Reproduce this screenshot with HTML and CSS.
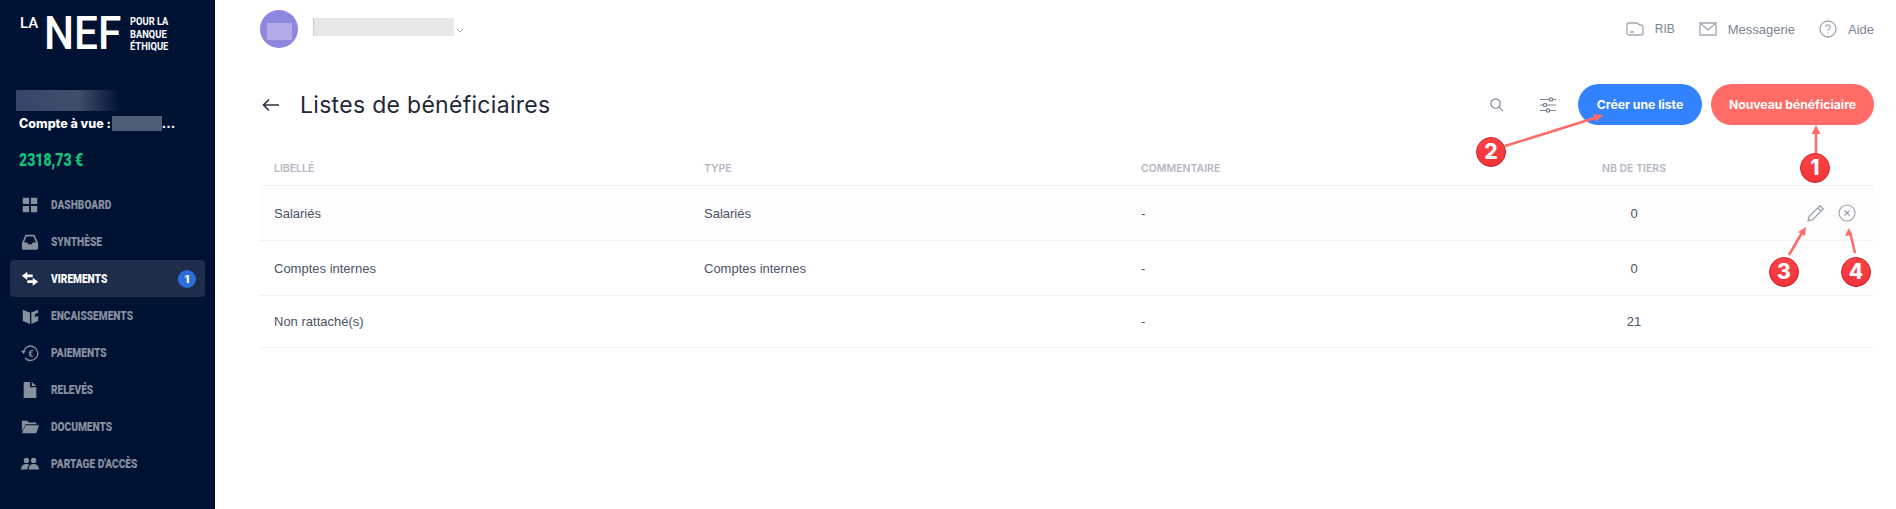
FILE: index.html
```html
<!doctype html>

<html lang="fr">

<head>
  <meta charset="utf-8">
  <title>Listes de bénéficiaires</title>
  <link rel="stylesheet" href="styles.css">
</head>

<body>

  <div class="app">

    <aside class="sidebar">
      <div class="logo">
        <span class="logo-la">LA</span>
        <span class="logo-nef">NEF</span>
        <span class="logo-tag">POUR LA<br>BANQUE<br>ÉTHIQUE</span>
      </div>

      <div class="account-blur"></div>
      <div class="account-name">Compte à vue :<span class="account-hidden"></span>...</div>
      <div class="account-amount"><span class="narrow">2318,73 €</span></div>

      <nav class="nav">
        <a class="nav-item">
          <svg class="nav-icon" viewBox="0 0 20 20"><path d="M2 2h7v7H2zM11 2h7v7h-7zM2 11h7v7H2zM11 11h7v7h-7z"/></svg>
          <span class="narrow">DASHBOARD</span>
        </a>
        <a class="nav-item">
          <svg class="nav-icon" viewBox="0 0 20 20"><path fill-rule="evenodd" d="M5 2h10l4 9v6a1.500 1.500 0 0 1-1.500 1.500h-15A1.500 1.500 0 0 1 1 17v-6zM6 4l-2.500 6.500H7l1 2h4l1-2h3.500L14 4z"/></svg>
          <span class="narrow">SYNTHÈSE</span>
        </a>
        <a class="nav-item active">
          <svg class="nav-icon" viewBox="0 0 20 20"><path d="M7 2v3h6v3H7v3L1 6.500zM13 8.500v3H7v3h6v3l6-4.500z"/></svg>
          <span class="narrow">VIREMENTS</span>
          <span class="nav-badge">1</span>
        </a>
        <a class="nav-item">
          <svg class="nav-icon" viewBox="0 0 20 20"><path d="M2 3l8 3.500V19l-8-3.500zM11.500 6L19 3v3.500l-3.500 1.200V11l3.500-1v5.500L11.500 19z"/></svg>
          <span class="narrow">ENCAISSEMENTS</span>
        </a>
        <a class="nav-item">
          <svg class="nav-icon" viewBox="0 0 20 20"><path class="line" d="M2.800 8.500A8 8 0 1 1 4.500 15.500"/><path d="M0 7.500h5.500L2.800 11z"/><text class="euro" x="11" y="14">€</text></svg>
          <span class="narrow">PAIEMENTS</span>
        </a>
        <a class="nav-item">
          <svg class="nav-icon" viewBox="0 0 20 20"><path d="M3 1h7v6h7v12H3zM12 1l5 4.500h-5z"/></svg>
          <span class="narrow">RELEVÉS</span>
        </a>
        <a class="nav-item">
          <svg class="nav-icon" viewBox="0 0 20 20"><path d="M1 3h6l2 2h8v2H5l-4 8zM5 8h15l-3 9H1z"/></svg>
          <span class="narrow">DOCUMENTS</span>
        </a>
        <a class="nav-item">
          <svg class="nav-icon" viewBox="0 0 20 20"><circle cx="6" cy="6" r="3"/><circle cx="14" cy="6" r="3"/><path d="M0 16c0-4 3-6 6-6 1.500 0 2.500.5 3 1-1 1-2 3-2 5zM8.500 16c0-4 2.500-6 5.500-6s6 2 6 6z"/></svg>
          <span class="narrow">PARTAGE D'ACCÈS</span>
        </a>
      </nav>
    </aside>

    <main class="main">

      <header class="topbar">
        <div class="avatar"><div class="avatar-inner"></div></div>
        <div class="user-blur"></div>
        <svg class="chevron" viewBox="0 0 10 6"><path d="M1 1l4 4 4-4"/></svg>

        <div class="top-links">
          <a class="top-link top-link-rib">
            <svg class="top-icon" viewBox="0 0 18 14"><path d="M1 3a2 2 0 0 1 2-2h8l2.500 2H15a2 2 0 0 1 2 2v6a2 2 0 0 1-2 2H3a2 2 0 0 1-2-2zM4 10h4"/></svg>
            RIB
          </a>
          <a class="top-link">
            <svg class="top-icon" viewBox="0 0 18 14"><path d="M1 1h16v12H1zM1 1l8 7 8-7"/></svg>
            Messagerie
          </a>
          <a class="top-link">
            <svg class="top-icon help" viewBox="0 0 18 18"><circle cx="9" cy="9" r="8"/><path d="M6.800 7a2.200 2.200 0 1 1 3.300 2c-.8.500-1.100.9-1.100 1.700M9 12.600v.6"/></svg>
            Aide
          </a>
        </div>
      </header>

      <div class="page-head">
        <svg class="back" viewBox="0 0 18 14"><path d="M17 7H2M7 1.500L1.500 7 7 12.500"/></svg>
        <h1 class="title">Listes de bénéficiaires</h1>
        <div class="actions">
          <svg class="tool search" viewBox="0 0 16 16"><circle cx="7" cy="7" r="5"/><path d="M11 11l4 4"/></svg>
          <svg class="tool filters" viewBox="0 0 16 16"><path d="M0 2.500h9M13 2.500h3M0 8h3M7 8h9M0 13.500h6M10 13.500h6"/><circle cx="11" cy="2.500" r="1.700"/><circle cx="5" cy="8" r="1.700"/><circle cx="8" cy="13.500" r="1.700"/></svg>
          <button class="btn btn-blue">Créer une liste</button>
          <button class="btn btn-red">Nouveau bénéficiaire</button>
        </div>
      </div>

      <div class="table">
        <div class="row row-head">
          <div>Libellé</div>
          <div>Type</div>
          <div>Commentaire</div>
          <div class="cell-center">Nb de tiers</div>
          <div></div>
        </div>
        <div class="row row-hover">
          <div>Salariés</div>
          <div>Salariés</div>
          <div>-</div>
          <div class="cell-center">0</div>
          <div class="row-actions">
            <svg class="row-icon" viewBox="0 0 16 16"><path d="M11.500 1.500l3 3L5 14l-4 1 1-4zM9.500 3.500l3 3"/></svg>
            <svg class="row-icon" viewBox="0 0 18 18"><circle cx="9" cy="9" r="8"/><path d="M6.500 6.500l5 5M11.500 6.500l-5 5"/></svg>
          </div>
        </div>
        <div class="row">
          <div>Comptes internes</div>
          <div>Comptes internes</div>
          <div>-</div>
          <div class="cell-center">0</div>
          <div></div>
        </div>
        <div class="row row-last">
          <div>Non rattaché(s)</div>
          <div></div>
          <div>-</div>
          <div class="cell-center">21</div>
          <div></div>
        </div>
      </div>

    </main>
  </div>

  <!-- annotations drawn over the screenshot -->
  <svg class="notes" viewBox="0 0 1896 509">
    <defs>
      <linearGradient id="pin" x1="0" y1="0" x2="0" y2="1">
        <stop offset="0" stop-color="#ff4448"/>
        <stop offset="1" stop-color="#ee3238"/>
      </linearGradient>
    </defs>
    <g class="arrows">
      <path d="M1816 154L1816 130"/>
      <path d="M1505 146L1598 117"/>
      <path d="M1789 255L1803 231"/>
      <path d="M1855 253L1850 232"/>
    </g>
    <g class="arrow-heads">
      <path d="M1816 125l-4.500 9h9z"/>
      <path d="M1603 115l-10-1 3 8z"/>
      <path d="M1806 227l-8 5 7 4z"/>
      <path d="M1849 228l-4 8 7-1z"/>
    </g>
    <g class="pins">
      <circle cx="1815" cy="168" r="14.500"/>
      <circle cx="1491" cy="152" r="14.500"/>
      <circle cx="1784" cy="272" r="14.500"/>
      <circle cx="1856" cy="272" r="14.500"/>
    </g>
    <g class="pin-text">
      <text x="1815" y="175">1</text>
      <text x="1491" y="159">2</text>
      <text x="1784" y="279">3</text>
      <text x="1856" y="279">4</text>
    </g>
  </svg>

</body>

</html>
```

FILE: styles.css
```css
* {
  box-sizing: border-box;
}

html,
body {
  margin: 0;
  height: 100%;
  overflow: hidden;
  background-color: #fff;
}

body {
  position: relative;
  font-family: "Inter", "Liberation Sans", sans-serif;
  color: #4a5366;
}

.app {
  display: flex;
  height: 509px;
}

/* no condensed face is installed, so squeeze the bold one */
.narrow {
  display: inline-block;
  transform: scaleX(0.78);
  transform-origin: left center;
  white-space: nowrap;
}

/* sidebar */

.sidebar {
  width: 215px;
  flex-shrink: 0;
  background-color: #001233;
  padding: 17px 10px 0;
}

.logo {
  display: flex;
  height: 73px;
  padding-left: 10px;
  color: #fff;
  font-family: "Roboto", "Liberation Sans", sans-serif;
}

.logo-la {
  font-size: 15px;
  font-weight: 500;
  line-height: 12px;
  width: 24px;
}

.logo-nef {
  width: 86px;
  font-size: 46px;
  font-weight: 500;
  line-height: 33px;
  white-space: nowrap;
  transform: scaleX(0.92);
  transform-origin: left center;
}

.logo-tag {
  font-size: 11px;
  font-weight: 700;
  line-height: 12.700px;
  margin-top: -1px;
  white-space: nowrap;
  transform: scaleX(0.85);
  transform-origin: left top;
}

.account-blur {
  width: 104px;
  height: 21px;
  margin-left: 6px;
  background: linear-gradient(90deg, #36466a, #3f4f6a 60%, #001233);
}

.account-name {
  display: flex;
  align-items: center;
  margin: 5px 0 0 9px;
  height: 15px;
  font-size: 12.500px;
  font-weight: 800;
  color: #fff;
  white-space: nowrap;
}

.account-hidden {
  width: 50px;
  height: 15px;
  margin-left: 1px;
  background-color: #4f5f78;
}

.account-amount {
  margin: 20px 0 0 9px;
  font-family: "Roboto", sans-serif;
  font-size: 18px;
  line-height: 18px;
  font-weight: 900;
  color: #12c27a;
}

.nav {
  display: flex;
  flex-direction: column;
  margin-top: 17px;
}

.nav-item {
  display: flex;
  align-items: center;
  height: 37px;
  padding-left: 11px;
  border-radius: 4px;
  font-family: "Roboto", sans-serif;
  font-size: 13px;
  font-weight: 900;
  color: #87909f;
  white-space: nowrap;
}

.nav-item.active {
  background-color: #1d2d4b;
  color: #fff;
}

.nav-icon {
  width: 18px;
  height: 18px;
  margin-right: 12px;
  fill: #87909f;
}

.nav-item.active .nav-icon {
  fill: #fff;
}

.nav-icon .line {
  fill: none;
  stroke: #87909f;
  stroke-width: 1.500;
}

.nav-icon .euro {
  font-size: 11px;
  font-weight: 700;
  text-anchor: middle;
}

.nav-badge {
  display: flex;
  align-items: center;
  justify-content: center;
  width: 18px;
  height: 18px;
  margin-left: auto;
  margin-right: 9px;
  border-radius: 50%;
  background-color: #2c6fdc;
  font-family: "Inter", sans-serif;
  font-size: 10px;
  color: #fff;
}

/* main */

.main {
  flex: 1;
  min-width: 0;
  padding: 0 22px 0 45px;
}

.topbar {
  display: flex;
  align-items: center;
  height: 58px;
}

.avatar {
  display: flex;
  align-items: center;
  justify-content: center;
  width: 38px;
  height: 38px;
  border-radius: 50%;
  background-color: #8d87e0;
}

.avatar-inner {
  width: 25px;
  height: 17px;
  margin-top: 5px;
  background-color: #b1ace8;
}

.user-blur {
  width: 141px;
  height: 18px;
  margin: -4px 0 0 15px;
  border-left: 1px solid #c9ccd2;
  background-color: #e6e7e9;
}

.chevron {
  width: 8px;
  height: 5px;
  margin-left: 2px;
  margin-top: 2px;
  fill: none;
  stroke: #9ea4ae;
  stroke-width: 1.200;
}

.top-links {
  display: flex;
  align-items: center;
  gap: 24px;
  margin-left: auto;
}

.top-link {
  display: flex;
  align-items: center;
  gap: 11px;
  font-family: "Liberation Sans", sans-serif;
  font-size: 13px;
  color: #7c8494;
}

.top-link-rib {
  font-size: 12px;
}

.top-icon {
  width: 18px;
  height: 14px;
  fill: none;
  stroke: #a2a7b1;
  stroke-width: 1.300;
}

.top-icon.help {
  height: 18px;
}

.page-head {
  display: flex;
  align-items: center;
  height: 41px;
  margin-top: 26px;
  padding-left: 2px;
}

.back {
  width: 18px;
  height: 14px;
  fill: none;
  stroke: #2b3242;
  stroke-width: 1.600;
}

.title {
  margin: 0 0 0 20px;
  font-size: 23px;
  font-weight: 400;
  letter-spacing: 0.3px;
  color: #1f2738;
}

.actions {
  display: flex;
  align-items: center;
  margin-left: auto;
}

.tool {
  width: 15px;
  height: 15px;
  fill: none;
  stroke: #7c8494;
  stroke-width: 1.200;
}

.tool.filters {
  width: 16px;
  height: 16px;
  margin: 0 22px 0 36px;
}

.btn {
  height: 41px;
  border: none;
  border-radius: 21px;
  font-family: inherit;
  font-size: 12.200px;
  font-weight: 700;
  color: #fff;
}

.btn-blue {
  width: 124px;
  background-color: #3382ff;
}

.btn-red {
  width: 163px;
  margin-left: 9px;
  background-color: #ff6b66;
}

/* table */

.table {
  margin-top: 18px;
}

.row {
  display: grid;
  grid-template-columns: 430px 437px 433px 120px 1fr;
  align-items: center;
  height: 55px;
  padding-left: 14px;
  border-bottom: 1px solid #f1f3f6;
  font-family: "Liberation Sans", sans-serif;
  font-size: 13px;
}

.row > div:first-child {
  margin-right: -14px;
}

.row-head {
  height: 43px;
  padding-top: 9px;
  font-family: "Inter", sans-serif;
  font-size: 10.500px;
  font-weight: 600;
  text-transform: uppercase;
  color: #b3b8c4;
}

.row-hover {
  background-color: #fdfdfd;
}

.row-last {
  height: 52px;
}

.cell-center {
  text-align: center;
  white-space: nowrap;
}

.row-actions {
  display: flex;
  align-items: center;
  justify-content: flex-end;
  gap: 13px;
  padding-right: 18px;
}

.row-icon {
  width: 18px;
  height: 18px;
  fill: none;
  stroke: #9ea4ae;
  stroke-width: 1.200;
}

/* annotations */

.notes {
  position: absolute;
  top: 0;
  left: 0;
  width: 1896px;
  height: 509px;
  pointer-events: none;
}

.arrows path {
  fill: none;
  stroke: #ff6b66;
  stroke-width: 2.500;
}

.arrow-heads path {
  fill: #ff6b66;
}

.pins circle {
  fill: url(#pin);
  stroke: #c9262c;
  stroke-width: 1;
}

.pin-text text {
  font-family: "Inter", sans-serif;
  font-size: 21px;
  font-weight: 800;
  fill: #fff;
  text-anchor: middle;
}
```
